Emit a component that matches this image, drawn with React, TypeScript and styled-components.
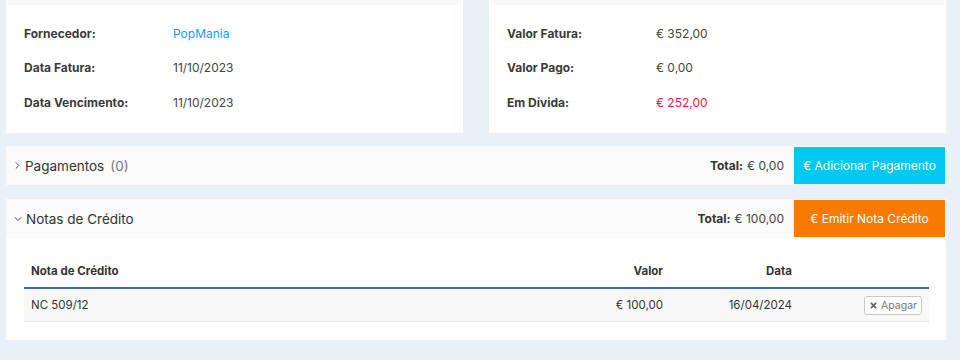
import { ChevronDown, ChevronRight } from "lucide-react";
import { FaTimes } from "react-icons/fa";
import styled, { createGlobalStyle } from "styled-components";

const GlobalStyle = createGlobalStyle`
  html, body {
    margin: 0;
    padding: 0;
    background: #e9f0f8;
    font-family: Inter, "Liberation Sans", sans-serif;
    color: #333;
  }
`;

const Page = styled.div`
  width: 940px;
  padding-left: 6px;
  display: flex;
  flex-direction: column;
`;

const TopRow = styled.div`
  display: grid;
  grid-template-columns: 457px 457px;
  gap: 26px;
`;

const InfoCard = styled.div`
  background: #fff;
  height: 133px;
  box-sizing: border-box;
  padding: 0 2px;

  &::before {
    content: "";
    display: block;
    height: 5px;
    background: #f8f8f9;
  }
`;

const InfoList = styled.dl`
  margin: 0;
  padding: 11px 16px 0;
`;

const InfoRow = styled.div`
  display: grid;
  grid-template-columns: 149px 1fr;
  align-items: center;
  height: 34.5px;
  font-size: 12px;
`;

const Label = styled.dt`
  font-weight: 700;
  color: #3a3a3a;
`;

const Value = styled.dd<{ $tone?: "link" | "danger" }>`
  margin: 0;
  color: ${({ $tone }) =>
    $tone === "link" ? "#1b9af5" : $tone === "danger" ? "#f2124a" : "#444"};
`;

const Panel = styled.section<{ $gapTop: number }>`
  margin-top: ${({ $gapTop }) => $gapTop}px;
  background: #fff;
`;

const PanelHeader = styled.div<{ $h: number }>`
  height: ${({ $h }) => $h}px;
  box-sizing: border-box;
  padding: 1px 1px 1px 6px;
  background: #fafafa;
  display: flex;
  align-items: stretch;
`;

const Title = styled.div`
  flex: 1;
  display: flex;
  align-items: center;
  gap: 2px;
  font-size: 13.5px;
  color: #333;

  svg {
    color: #444;
  }
`;

const Count = styled.span`
  color: #777;
  margin-left: 4px;
`;

const Total = styled.div`
  display: flex;
  align-items: center;
  font-size: 12px;
  color: #444;
  padding-right: 10px;

  b {
    font-weight: 700;
    color: #333;
    margin-right: 4px;
  }
`;

const ActionButton = styled.button<{ $color: string }>`
  width: 151px;
  border: 0;
  background: ${({ $color }) => $color};
  color: #fff;
  font-family: inherit;
  font-size: 12px;
  padding: 0;
  cursor: pointer;
`;

const PanelBody = styled.div`
  padding: 17px 17px 18px 18px;
`;

const Table = styled.table`
  width: 905px;
  border-collapse: collapse;
  font-size: 11.5px;
  color: #333;

  th {
    font-weight: 700;
    height: 32px;
    padding: 0 7px;
    border-bottom: 2px solid #3f6ea6;
    text-align: left;
  }

  td {
    height: 32px;
    padding: 0 7px;
    background: #f8f8f8;
    border-bottom: 1px solid #e2e2e2;
  }

  .right {
    text-align: right;
  }
`;

const DeleteButton = styled.button`
  display: inline-flex;
  align-items: center;
  gap: 3px;
  height: 19px;
  padding: 0 4px;
  border: 1px solid #c9c9c9;
  border-radius: 3px;
  background: #fff;
  color: #777;
  font-family: inherit;
  font-size: 10.5px;
  cursor: pointer;

  svg {
    width: 9px;
    height: 9px;
    color: #666;
  }
`;

export default function App() {
  return (
    <>
      <GlobalStyle />
      <Page>
        <TopRow>
          <InfoCard>
            <InfoList>
              <InfoRow>
                <Label>Fornecedor:</Label>
                <Value $tone="link">PopMania</Value>
              </InfoRow>
              <InfoRow>
                <Label>Data Fatura:</Label>
                <Value>11/10/2023</Value>
              </InfoRow>
              <InfoRow>
                <Label>Data Vencimento:</Label>
                <Value>11/10/2023</Value>
              </InfoRow>
            </InfoList>
          </InfoCard>
          <InfoCard>
            <InfoList>
              <InfoRow>
                <Label>Valor Fatura:</Label>
                <Value>€ 352,00</Value>
              </InfoRow>
              <InfoRow>
                <Label>Valor Pago:</Label>
                <Value>€ 0,00</Value>
              </InfoRow>
              <InfoRow>
                <Label>Em Dívida:</Label>
                <Value $tone="danger">€ 252,00</Value>
              </InfoRow>
            </InfoList>
          </InfoCard>
        </TopRow>

        <Panel $gapTop={13}>
          <PanelHeader $h={39}>
            <Title>
              <ChevronRight size={11} strokeWidth={2} />
              Pagamentos<Count>(0)</Count>
            </Title>
            <Total>
              <b>Total:</b>€ 0,00
            </Total>
            <ActionButton $color="#00c8f2">€ Adicionar Pagamento</ActionButton>
          </PanelHeader>
        </Panel>

        <Panel $gapTop={14}>
          <PanelHeader $h={39}>
            <Title>
              <ChevronDown size={12} strokeWidth={2} />
              Notas de Crédito
            </Title>
            <Total>
              <b>Total:</b>€ 100,00
            </Total>
            <ActionButton $color="#f87a00">€ Emitir Nota Crédito</ActionButton>
          </PanelHeader>
          <PanelBody>
            <Table>
              <thead>
                <tr>
                  <th>Nota de Crédito</th>
                  <th className="right" style={{ width: 120 }}>Valor</th>
                  <th className="right" style={{ width: 115 }}>Data</th>
                  <th style={{ width: 116 }}></th>
                </tr>
              </thead>
              <tbody>
                <tr>
                  <td>NC 509/12</td>
                  <td className="right">€ 100,00</td>
                  <td className="right">16/04/2024</td>
                  <td className="right">
                    <DeleteButton>
                      <FaTimes />
                      Apagar
                    </DeleteButton>
                  </td>
                </tr>
              </tbody>
            </Table>
          </PanelBody>
        </Panel>
      </Page>
    </>
  );
}
